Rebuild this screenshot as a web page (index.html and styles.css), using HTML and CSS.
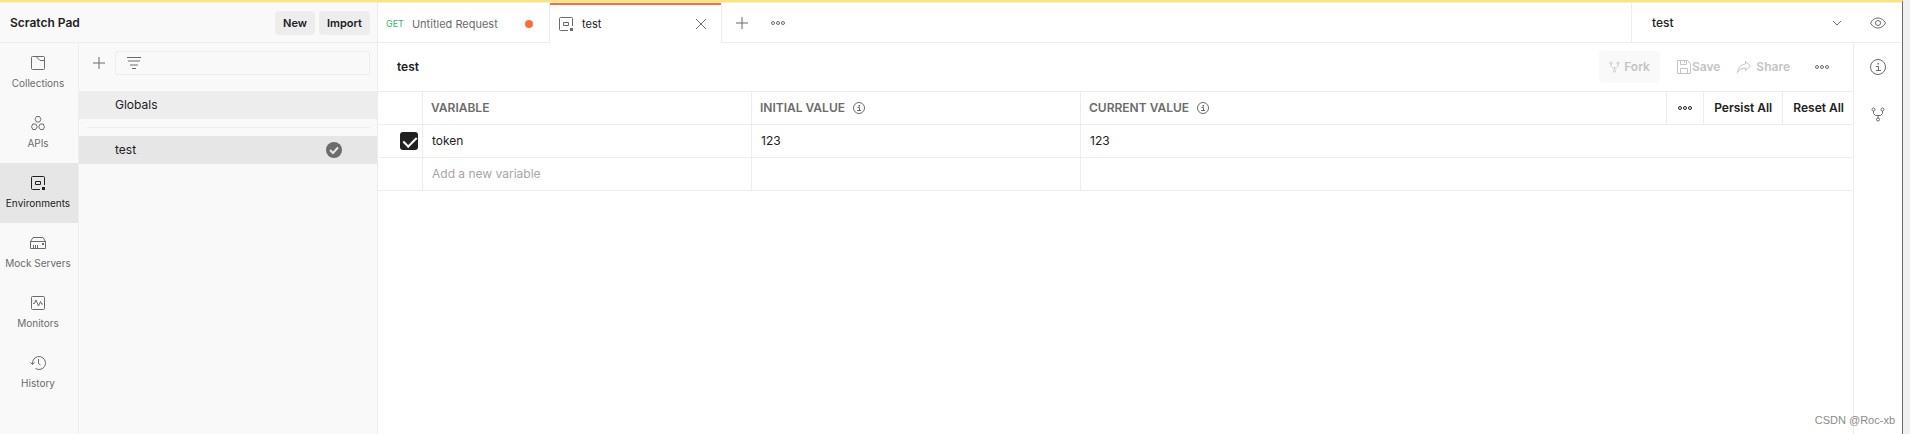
FILE: index.html
```html
<!DOCTYPE html>
<html lang="en">
<head>
<meta charset="utf-8">
<title>Scratch Pad</title>
<link rel="stylesheet" href="styles.css">
</head>
<body>
<svg class="sprite" aria-hidden="true">
  <symbol id="env" viewBox="0 0 14 14"><path fill="none" stroke="currentColor" d="M9 13.500H1.500a1 1 0 0 1-1-1V1.500a1 1 0 0 1 1-1H12.500a1 1 0 0 1 1 1V9M4.500 5.500h5v3h-5z"/><path fill="currentColor" d="M11 11h3v3h-3z"/></symbol>
  <symbol id="dots" viewBox="0 0 14 4"><g fill="none" stroke="currentColor"><circle cx="2" cy="2" r="1.500"/><circle cx="7" cy="2" r="1.500"/><circle cx="12" cy="2" r="1.500"/></g></symbol>
  <symbol id="plus" viewBox="0 0 12 12"><path fill="none" stroke="currentColor" d="M6 0v12M0 6h12"/></symbol>
  <symbol id="info" viewBox="0 0 16 16"><circle cx="8" cy="8" r="7.500" fill="none" stroke="currentColor"/><path fill="none" stroke="currentColor" d="M6 7.500h2.500V11.500M6 11.500h5"/><path fill="currentColor" d="M7.500 4h1.500v1.500H7.500z"/></symbol>
  <symbol id="info-small" viewBox="0 0 12 12"><circle cx="6" cy="6" r="5.500" fill="none" stroke="currentColor"/><path fill="none" stroke="currentColor" d="M4.500 5.500h2V8.500M4 8.500h4"/><path fill="currentColor" d="M5.500 3h1.500v1.500H5.500z"/></symbol>
  <symbol id="fork" viewBox="0 0 14 15"><g fill="none" stroke="currentColor"><circle cx="2.500" cy="2.500" r="1.500"/><circle cx="11.500" cy="2.500" r="1.500"/><circle cx="7" cy="12.500" r="1.500"/><path d="M2.500 4v2.500l2 2h5l2-2V4M7 8.500V11"/></g></symbol>
</svg>
<div class="window">
  <header class="topbar">
    <div class="brand">
      <h1 class="brand-name">Scratch Pad</h1>
      <button class="chip" type="button">New</button>
      <button class="chip" type="button">Import</button>
    </div>
    <nav class="tabs" aria-label="Open tabs">
      <button class="tab" type="button"><span class="method">GET</span><span class="tab-name">Untitled Request</span><span class="unsaved"></span></button>
      <div class="tab tab-active"><svg class="i14"><use href="#env"/></svg><span class="tab-name">test</span><button class="icon-button close" type="button" aria-label="Close tab"><svg viewBox="0 0 12 12" class="i12"><path fill="none" stroke="currentColor" d="M1 1l10 10M11 1L1 11"/></svg></button></div>
      <div class="tab-tools">
        <button class="icon-button" type="button" aria-label="New tab"><svg class="i12"><use href="#plus"/></svg></button>
        <button class="icon-button" type="button" aria-label="Tab options"><svg class="dots"><use href="#dots"/></svg></button>
      </div>
    </nav>
    <div class="env-picker">
      <select class="env-select" aria-label="Environment"><option>test</option></select>
      <svg class="chevron" viewBox="0 0 10 6"><path fill="none" stroke="currentColor" d="M1 1l4 4 4-4"/></svg>
      <button class="icon-button" type="button" aria-label="Environment quick look"><svg class="i16" viewBox="0 0 16 16"><g fill="none" stroke="currentColor"><path d="M.5 8C2.500 4.500 5 3 8 3s5.500 1.500 7.500 5C13.500 11.500 11 13 8 13S2.500 11.500.5 8z"/><circle cx="8" cy="8" r="2.500"/></g></svg></button>
    </div>
  </header>
  <div class="workspace">
    <nav class="rail" aria-label="Sections">
      <a class="rail-item" href="#"><svg class="i14" viewBox="0 0 14 14"><path fill="none" stroke="currentColor" d="M5 .5H1.500a1 1 0 0 0-1 1v11a1 1 0 0 0 1 1h11a1 1 0 0 0 1-1v-11a1 1 0 0 0-1-1H5L9 4.500h4.500"/></svg>Collections</a>
      <a class="rail-item" href="#"><svg class="i14" viewBox="0 0 14 14"><g fill="none" stroke="currentColor"><path d="M5.500.5h3L10 3.250 8.500 6h-3L4 3.250zM1.750 8h3l1.500 2.750-1.500 2.750h-3L.5 10.750zM9.250 8h3l1.250 2.750-1.250 2.750h-3l-1.500-2.750z"/></g></svg>APIs</a>
      <a class="rail-item rail-active" href="#"><svg class="i14"><use href="#env"/></svg>Environments</a>
      <a class="rail-item" href="#"><svg class="i16" viewBox="0 0 16 14"><path fill="none" stroke="currentColor" d="M.5 5.500h15v7H.5zM.5 5.500L3 1.500h10l2.500 4M3.500 9v3M5.500 9v3M7.500 9v3"/><path fill="currentColor" d="M12 7h2v2h-2z"/></svg>Mock Servers</a>
      <a class="rail-item" href="#"><svg class="i14" viewBox="0 0 14 14"><rect x=".5" y=".5" width="13" height="13" rx="1" fill="none" stroke="currentColor"/><path fill="none" stroke="currentColor" d="M2 7.500h1.500L5 4l2.500 6 2-4.500 1 2.500H12"/></svg>Monitors</a>
      <a class="rail-item" href="#"><svg class="i16" viewBox="0 0 16 14"><path fill="none" stroke="currentColor" d="M2.500 8V7A6.500 6.500 0 1 1 5.500 12.500M.5 6.500l2 2 2-2M8.500 3v4.500L10.500 9"/></svg>History</a>
    </nav>
    <aside class="sidebar">
      <div class="filter-row">
        <button class="icon-button add" type="button" aria-label="Create environment"><svg class="i12"><use href="#plus"/></svg></button>
        <label class="filter"><svg class="i14" viewBox="0 0 14 14"><path fill="none" stroke="#6b6b6b" d="M0 1.500h14M5 12.500h4"/><path fill="none" stroke="#b4b4b4" stroke-width="2" d="M1 5h12M3 9h8"/></svg><input class="filter-input" type="text" aria-label="Filter environments"></label>
      </div>
      <a class="env-row" href="#">Globals</a>
      <hr class="divider">
      <a class="env-row env-current" href="#">test<svg class="i16" viewBox="0 0 16 16"><circle cx="8" cy="8" r="8" fill="#6b6b6b"/><path fill="none" stroke="#e6e6e6" stroke-width="2" d="M4 8l3 3 5-5.500"/></svg></a>
    </aside>
    <main class="content">
      <div class="title-row">
        <h2 class="title">test</h2>
        <button class="action fork" type="button" disabled><svg class="fork-icon"><use href="#fork"/></svg>Fork</button>
        <button class="action save" type="button" disabled><svg class="i14" viewBox="0 0 14 14"><path fill="none" stroke="currentColor" d="M.5.5h10l3 3v10H.5zM3.500.5v4h6v-4M7.500 1v2M3.500 13.500v-5h7v5"/></svg>Save</button>
        <button class="action share" type="button" disabled><svg class="i14" viewBox="0 0 14 14"><path fill="none" stroke="currentColor" d="M8.500 1.500l5 4.500-5 4.500V8C4.500 8 2.500 9.500.5 12.500 1 8 3.500 4.500 8.500 4z"/></svg>Share</button>
        <button class="icon-button more" type="button" aria-label="More actions"><svg class="dots"><use href="#dots"/></svg></button>
      </div>
      <table class="variables">
        <colgroup><col class="col-check"><col class="col-value"><col class="col-value"><col></colgroup>
        <thead>
          <tr>
            <th aria-label="Enabled"></th>
            <th><div class="heading">VARIABLE</div></th>
            <th><div class="heading">INITIAL VALUE<svg class="i12"><use href="#info-small"/></svg></div></th>
            <th><div class="heading">CURRENT VALUE<svg class="i12"><use href="#info-small"/></svg>
              <div class="bulk"><button class="bulk-button" type="button" aria-label="Column options"><svg class="dots"><use href="#dots"/></svg></button><button class="bulk-button" type="button">Persist All</button><button class="bulk-button" type="button">Reset All</button></div></div></th>
          </tr>
        </thead>
        <tbody>
          <tr>
            <td><input class="check" type="checkbox" checked aria-label="Enable token"></td>
            <td><input class="cell" type="text" value="token" aria-label="Variable"></td>
            <td><input class="cell" type="text" value="123" aria-label="Initial value"></td>
            <td><input class="cell" type="text" value="123" aria-label="Current value"></td>
          </tr>
          <tr>
            <td></td>
            <td><input class="cell" type="text" placeholder="Add a new variable" aria-label="New variable"></td>
            <td><input class="cell" type="text" aria-label="New initial value"></td>
            <td><input class="cell" type="text" aria-label="New current value"></td>
          </tr>
        </tbody>
      </table>
    </main>
    <aside class="tools">
      <button class="icon-button" type="button" aria-label="Details"><svg class="i16"><use href="#info"/></svg></button>
      <button class="icon-button" type="button" aria-label="Forks"><svg class="fork-large"><use href="#fork"/></svg></button>
    </aside>
  </div>
  <div class="watermark">CSDN @Roc-xb</div>
</div>
</body>
</html>
```
FILE: styles.css
```css
* { box-sizing: border-box; }
body {
  margin: 0;
  padding-right: 7px;
  background: #f0f0f0;
  color: #212121;
  font: 12px/16px Inter, "Liberation Sans", sans-serif;
}
button, input, select { font: inherit; color: inherit; border: 0; background: none; padding: 0; margin: 0; }
a { color: inherit; text-decoration: none; }
h1, h2 { margin: 0; font-size: 12px; font-weight: 600; }
svg { display: block; flex: none; }
.sprite { position: absolute; width: 0; height: 0; }
.i12 { width: 12px; height: 12px; }
.i14 { width: 14px; height: 14px; }
.i16 { width: 16px; height: 16px; }
.dots { width: 14px; height: 4px; }
.icon-button { display: flex; color: #6b6b6b; }

.window {
  position: relative;
  display: flex;
  flex-direction: column;
  min-height: 100vh;
  border-top: 2px solid #ffe47e;
  border-right: 1px solid #6b6b6b;
  background: #fff;
}
.topbar { display: flex; height: 41px; border-top: 1px solid #ededed; }
.brand {
  display: flex;
  align-items: center;
  gap: 4px;
  width: 378px;
  padding: 0 7px 0 10px;
  border-right: 1px solid #ededed;
  border-bottom: 1px solid #ededed;
  background: #f9f9f9;
}
.brand-name { margin-right: auto; }
.chip { height: 24px; padding: 0 8px; border-radius: 4px; background: #ededed; font-size: 11px; font-weight: 600; }
.tabs { display: flex; flex: 1; }
.tab {
  display: flex;
  align-items: center;
  width: 171px;
  padding: 2px 16px 0 8px;
  border-bottom: 1px solid #ededed;
  color: #6b6b6b;
  font-size: 11px;
}
.method { margin-right: 8px; color: #2eb66f; font-size: 9px; }
.unsaved { width: 8px; height: 8px; margin-left: auto; border-radius: 50%; background: #ff6c37; }
.tab-active {
  width: 173px;
  gap: 9px;
  padding: 2px 14px 0 9px;
  border: solid #ededed;
  border-width: 0 1px;
  background: linear-gradient(#ff6c37 2px, #fff 2px);
}
.tab-active .tab-name { color: #212121; }
.close { margin-left: auto; }
.tab-tools {
  display: flex;
  flex: 1;
  align-items: center;
  gap: 23px;
  padding-left: 14px;
  border-bottom: 1px solid #ededed;
}
.env-picker {
  display: flex;
  align-items: center;
  width: 271px;
  padding-right: 16px;
  border-left: 1px solid #ededed;
  border-bottom: 1px solid #ededed;
  color: #6b6b6b;
}
.env-select { flex: 1; height: 24px; padding-left: 20px; appearance: none; color: #212121; font-weight: 500; }
.chevron { width: 10px; height: 6px; margin-right: 28px; }

.workspace { display: flex; flex: 1; }
.rail { width: 79px; border-right: 1px solid #ededed; background: #f9f9f9; }
.rail-item {
  display: flex;
  flex-direction: column;
  align-items: center;
  gap: 5px;
  height: 60px;
  padding: 13px 2px 0 0;
  color: #6b6b6b;
  font-size: 10px;
  white-space: nowrap;
}
.rail-item .i16 { height: 14px; }
.rail-active { background: #e6e6e6; color: #212121; }
.sidebar { width: 299px; border-right: 1px solid #ededed; background: #f9f9f9; }
.filter-row { display: flex; align-items: center; gap: 10px; height: 48px; padding: 0 7px 8px 14px; }
.filter {
  display: flex;
  flex: 1;
  align-items: center;
  height: 24px;
  padding-left: 11px;
  border: 1px solid #ededed;
  border-radius: 2px;
}
.filter-input { flex: 1; min-width: 0; padding-left: 8px; outline: 0; }
.env-row {
  display: flex;
  align-items: center;
  justify-content: space-between;
  height: 28px;
  padding: 0 35px 0 36px;
  background: #ededed;
}
.env-current { background: #e6e6e6; }
.divider { height: 1px; margin: 8px 7px 8px 8px; border: 0; background: #ededed; }

.content { flex: 1; min-width: 0; }
.title-row { display: flex; align-items: center; height: 48px; padding: 0 24px 0 19px; }
.title { margin-right: auto; }
.action { display: flex; align-items: center; height: 32px; color: #c4c4c4; font-weight: 600; }
.fork { gap: 4px; padding: 0 10px; border-radius: 4px; background: #f9f9f9; }
.fork-icon { width: 11px; height: 12px; }
.save { gap: 1px; margin-left: 17px; }
.share { gap: 5px; margin-left: 17px; }
.more { margin-left: 25px; }

.variables { width: 100%; table-layout: fixed; border-collapse: separate; border-spacing: 0; }
.col-check { width: 45px; }
.col-value { width: 329px; }
.variables th, .variables td { padding: 0; border: solid #ededed; border-width: 1px 1px 0 0; vertical-align: top; }
.variables th:last-child, .variables td:last-child { border-right: 0; }
.variables tbody tr:last-child td { border-bottom-width: 1px; }
.heading { display: flex; align-items: center; gap: 8px; height: 32px; padding-left: 8px; color: #6b6b6b; font-weight: 600; }
.bulk { display: flex; align-self: stretch; margin-left: auto; color: #212121; }
.bulk-button { padding: 0 10px; border-left: 1px solid #ededed; font-weight: 600; }
.bulk-button:first-child { padding: 0 11px; }
.bulk-button:last-child { padding-right: 9px; }
.cell { display: block; width: 100%; height: 32px; padding: 0 9px 1px; outline: 0; }
.cell::placeholder { color: #a6a6a6; opacity: 1; }
.check {
  display: block;
  width: 18px;
  height: 18px;
  margin: 7px 0 0 22px;
  appearance: none;
  border-radius: 3px;
  background: #212121;
}
.check:checked::before {
  content: "";
  display: block;
  width: 6px;
  height: 11px;
  margin: 2px 0 0 6px;
  border: solid #fff;
  border-width: 0 2px 2px 0;
  transform: rotate(45deg);
}
.tools { display: flex; flex-direction: column; align-items: center; gap: 32px; width: 49px; padding-top: 16px; border-left: 1px solid #ededed; }
.fork-large { width: 14px; height: 15px; }
.watermark { position: absolute; right: 7px; bottom: 6px; color: #8c8c8c; font: 11px/16px "Liberation Sans", sans-serif; }
```
